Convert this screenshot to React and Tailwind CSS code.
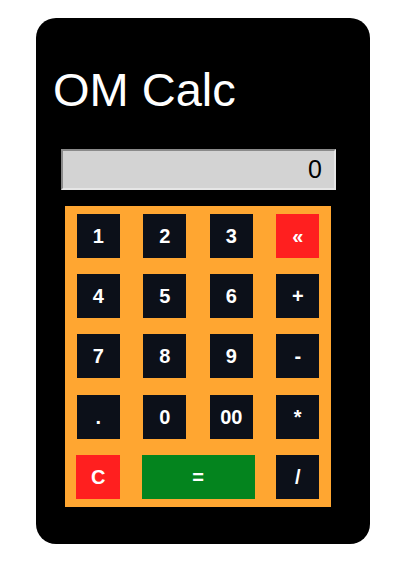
const keys = [
  ['1', 'dark'], ['2', 'dark'], ['3', 'dark'], ['«', 'red'],
  ['4', 'dark'], ['5', 'dark'], ['6', 'dark'], ['+', 'dark'],
  ['7', 'dark'], ['8', 'dark'], ['9', 'dark'], ['-', 'dark'],
  ['.', 'dark'], ['0', 'dark'], ['00', 'dark'], ['*', 'dark'],
];

const tone = {
  dark: 'bg-[#0c1019]',
  red: 'bg-[#ff1f1f]',
};

const App = () => {
  return (
    <div className="min-h-screen bg-white font-['Liberation_Sans',Arial,sans-serif]">
      <div className="ml-[36px] pt-[18px]">
        <div className="w-[334px] h-[526px] rounded-[20px] bg-black flex flex-col">
          <h1 className="mt-[48px] ml-[17px] text-[47px] leading-none text-white">OM Calc</h1>
          <div className="mt-[36px] ml-[25px] w-[275px] h-[41px] bg-[#d3d3d3] border-2 border-t-[#8a8a8a] border-l-[#8a8a8a] border-r-[#e6e6e6] border-b-[#e6e6e6] flex items-center justify-end pr-[12px] text-[25px] font-medium text-black">
            0
          </div>
          <div className="mt-[16px] ml-[29px] w-[266px] h-[301px] bg-[#ffa631] grid grid-cols-4 grid-rows-5 place-items-center">
            {keys.map(([label, kind]) => (
              <button
                key={label}
                className={`w-[43px] h-[44px] ${tone[kind]} text-white font-bold text-[20px] flex items-center justify-center`}
              >
                {label}
              </button>
            ))}
            <button className="w-[44px] h-[44px] bg-[#ff1f1f] text-white font-bold text-[20px]">C</button>
            <button className="col-span-2 w-[113px] h-[44px] bg-[#04841e] text-white font-bold text-[20px]">=</button>
            <button className="w-[43px] h-[44px] bg-[#0c1019] text-white font-bold text-[20px]">/</button>
          </div>
        </div>
      </div>
    </div>
  );
};

export default App;
